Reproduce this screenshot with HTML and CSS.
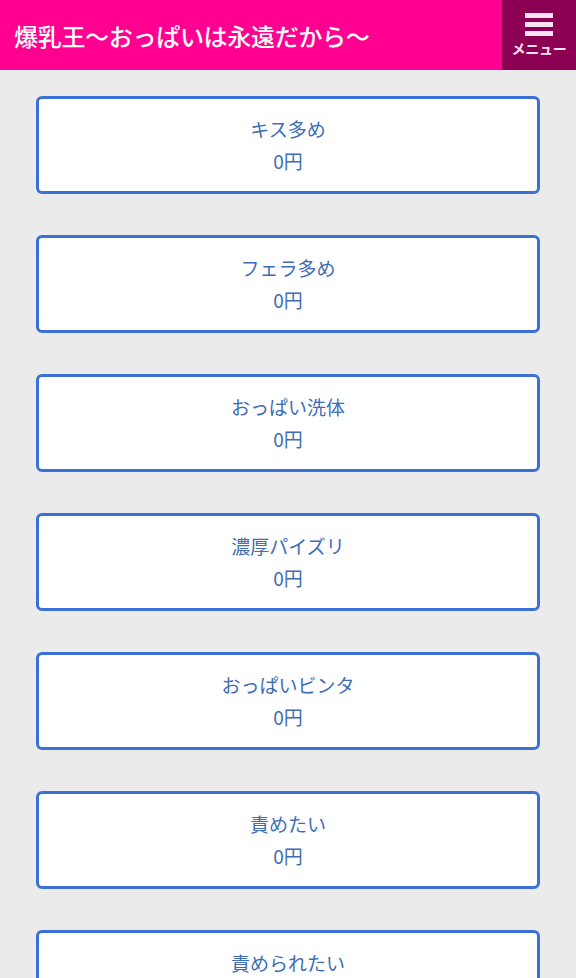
FILE: index.html
```html
<!DOCTYPE html>
<html lang="ja">
<head>
<meta charset="utf-8">
<link rel="stylesheet" href="styles.css">
</head>
<body>
<header class="header">
  <h1 class="title">爆乳王〜おっぱいは永遠だから〜</h1>
  <div class="menu">
    <span class="bars"><i></i><i></i><i></i></span>
    <span class="menu-label">メニュー</span>
  </div>
</header>
<main class="list">
  <div class="card"><div>キス多め</div><div>0円</div></div>
  <div class="card"><div>フェラ多め</div><div>0円</div></div>
  <div class="card"><div>おっぱい洗体</div><div>0円</div></div>
  <div class="card"><div>濃厚パイズリ</div><div>0円</div></div>
  <div class="card"><div>おっぱいビンタ</div><div>0円</div></div>
  <div class="card"><div>責めたい</div><div>0円</div></div>
  <div class="card"><div>責められたい</div><div>0円</div></div>
</main>
</body>
</html>
```
FILE: styles.css
```css
html, body {
  margin: 0;
  padding: 0;
  background: #ebebeb;
  font-family: "Noto Sans CJK JP", "Noto Sans", sans-serif;
}
.header {
  display: flex;
  align-items: stretch;
  height: 70px;
  background: #ff0091;
}
.title {
  flex: 1;
  margin: 0;
  padding-left: 14px;
  display: flex;
  align-items: center;
  color: #fff;
  font-size: 24px;
  font-weight: 500;
  letter-spacing: -0.3px;
  white-space: nowrap;
}
.menu {
  width: 74px;
  background: #8c0054;
  display: flex;
  flex-direction: column;
  align-items: center;
  padding-top: 13px;
  box-sizing: border-box;
}
.bars {
  display: flex;
  flex-direction: column;
  gap: 4px;
}
.bars i {
  display: block;
  width: 28px;
  height: 5px;
  background: #fbe3f1;
}
.menu-label {
  margin-top: 5px;
  color: #fbe3f1;
  font-size: 14px;
  font-weight: 700;
  line-height: 14px;
  letter-spacing: -0.3px;
}
.list {
  display: flex;
  flex-direction: column;
  align-items: center;
  gap: 41px;
  padding-top: 26px;
}
.card {
  width: 504px;
  box-sizing: border-box;
  height: 98px;
  background: #fff;
  border: 3px solid #3b70d4;
  border-radius: 6px;
  padding: 14px 0;
  text-align: center;
  color: #3e6db5;
  font-size: 19px;
  line-height: 32px;
  flex-shrink: 0;
}
```
